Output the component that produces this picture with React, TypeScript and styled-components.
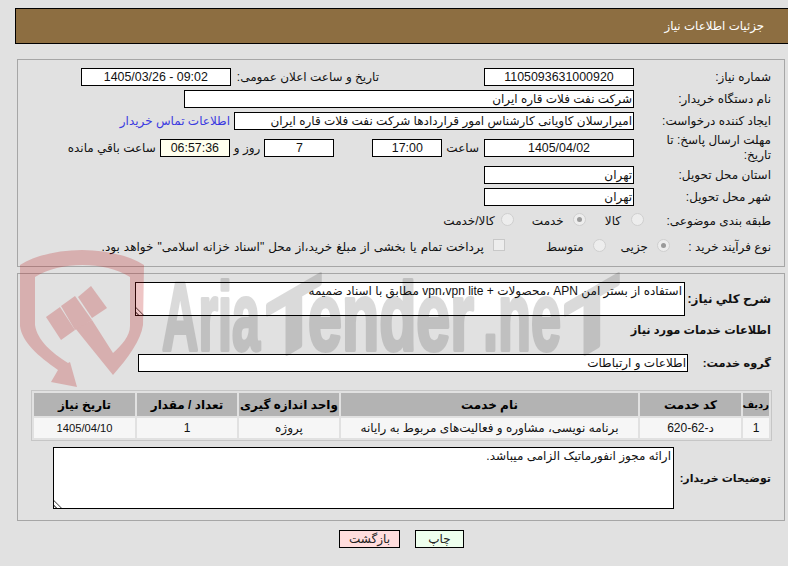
import React from "react";
import styled, { createGlobalStyle } from "styled-components";

const Global = createGlobalStyle`
  html, body { margin: 0; padding: 0; background: #e1e1e1; }
  body { font-family: "Liberation Sans", "DejaVu Sans", sans-serif; font-size: 12px; color: #111; overflow: hidden; }
`;

const Page = styled.div`
  position: relative;
  width: 788px;
  height: 566px;
  padding-top: 8px;
  box-sizing: border-box;
  direction: rtl;
  overflow: hidden;
`;

const Header = styled.div`
  height: 36px;
  margin-left: 15px;
  box-sizing: border-box;
  border: 1px solid #000;
  border-right: 0;
  background: #8d6e41;
  color: #fff;
  display: flex;
  align-items: center;
  padding-right: 24px;
  font-size: 11.8px;
`;

const Panel = styled.section<{ $h: number; $top: number }>`
  box-sizing: border-box;
  height: ${(p) => p.$h}px;
  width: 768px;
  margin: ${(p) => p.$top}px 3px 0 0;
  border: 1px solid #a6a6a6;
`;

const FormBody = styled.div`
  padding-top: 8px;
  display: flex;
  flex-direction: column;
`;

const Row = styled.div<{ $h?: number; $mt?: number }>`
  display: flex;
  align-items: center;
  height: ${(p) => p.$h ?? 18}px;
  margin-top: ${(p) => p.$mt ?? 4}px;
`;

const Label = styled.div<{ $bold?: boolean; $w?: number; $nowrap?: boolean; $size?: number }>`
  width: ${(p) => p.$w ?? 150}px;
  flex: none;
  box-sizing: border-box;
  padding: 0 13px 0 12px;
  line-height: 15px;
  font-weight: ${(p) => (p.$bold ? 700 : 400)};
  font-size: ${(p) => p.$size ?? 12}px;
  white-space: ${(p) => (p.$nowrap ? "nowrap" : "normal")};
`;

const Field = styled.div<{ $w: number; $center?: boolean; $bg?: string; $ml?: number; $ltr?: boolean }>`
  box-sizing: border-box;
  flex: none;
  width: ${(p) => p.$w}px;
  height: 18px;
  line-height: 16px;
  border: 1px solid #000;
  background: ${(p) => p.$bg ?? "#fff"};
  text-align: ${(p) => (p.$center ? "center" : "right")};
  direction: ${(p) => (p.$ltr ? "ltr" : "inherit")};
  padding: 0 1px;
  white-space: nowrap;
  overflow: hidden;
  font-size: ${(p) => (p.$center ? 12.4 : 12)}px;
  margin-right: ${(p) => p.$ml ?? 0}px;
`;

const Text = styled.span<{ $mr?: number; $ws?: number }>`
  flex: none;
  margin-right: ${(p) => p.$mr ?? 0}px;
  word-spacing: ${(p) => p.$ws ?? 0}px;
  white-space: nowrap;
`;

const Link = styled.a`
  flex: none;
  color: #3a3ae0;
  margin-right: 4px;
  white-space: nowrap;
`;

const Radio = styled.span<{ $on?: boolean; $mr?: number }>`
  flex: none;
  box-sizing: border-box;
  width: 13px;
  height: 13px;
  border-radius: 50%;
  border: 1px solid #cfcfcf;
  background: #ededed;
  margin-right: ${(p) => p.$mr ?? 0}px;
  margin-bottom: 3px;
  display: flex;
  align-items: center;
  justify-content: center;
  &::after {
    content: "";
    width: 5px;
    height: 5px;
    border-radius: 50%;
    background: ${(p) => (p.$on ? "#9a9a9a" : "transparent")};
  }
`;

const Check = styled.span<{ $mr?: number }>`
  flex: none;
  box-sizing: border-box;
  width: 12px;
  height: 12px;
  border: 1px solid #c8c8c8;
  background: #ededed;
  margin-right: ${(p) => p.$mr ?? 0}px;
  margin-bottom: 5px;
`;

const Area = styled.div<{ $w: number; $h: number }>`
  position: relative;
  box-sizing: border-box;
  flex: none;
  width: ${(p) => p.$w}px;
  height: ${(p) => p.$h}px;
  border: 1px solid #000;
  background: #fff;
  padding: 1px 2px;
  line-height: 15px;
  &::after {
    content: "";
    position: absolute;
    left: 0;
    bottom: 0;
    width: 8px;
    height: 8px;
    clip-path: polygon(0 0, 0 100%, 100% 100%);
    background: repeating-linear-gradient(45deg, transparent 0 1.2px, #777 1.2px 2.2px, transparent 2.2px 3.6px);
  }
`;

const Table = styled.table`
  width: 741px;
  margin: 18px 12px 0 0;
  border: 1px solid #c6c6c6;
  border-collapse: separate;
  border-spacing: 2px;
  padding: 0;
  table-layout: fixed;
  font-size: 12px;
`;

const Th = styled.th<{ $w?: number; $small?: boolean }>`
  width: ${(p) => (p.$w ? `${p.$w}px` : "auto")};
  height: 23px;
  padding: 0;
  background: #b3b3b3;
  color: #000;
  font-weight: 700;
  font-size: ${(p) => (p.$small ? 10 : 12)}px;
  text-align: center;
  white-space: nowrap;
`;

const Td = styled.td<{ $small?: boolean }>`
  height: 20px;
  padding: 0;
  background: #f6f6f6;
  text-align: center;
  font-size: ${(p) => (p.$small ? 11.2 : 12)}px;
`;

const Footer = styled.div`
  display: flex;
  justify-content: flex-start;
  gap: 15px;
  margin: 9px 0 0 339px;
  direction: ltr;
`;

const Btn = styled.button<{ $bg: string; $w: number }>`
  box-sizing: border-box;
  width: ${(p) => p.$w}px;
  height: 18px;
  border: 1px solid #000;
  background: ${(p) => p.$bg};
  padding: 0;
  font: 12px "Liberation Sans", "DejaVu Sans", sans-serif;
  color: #222;
`;

const Mark = styled.svg`
  position: absolute;
  left: 0;
  top: 240px;
  width: 788px;
  height: 160px;
  pointer-events: none;
  direction: ltr;
`;

const MarkWord = styled.text`
  font-family: "Liberation Sans", sans-serif;
  font-weight: 700;
  font-size: 96px;
  fill: #000;
  stroke: #000;
  stroke-width: 4px;
  stroke-linejoin: round;
`;

const MarkSlantT = styled(MarkWord)`
  font-size: 88px;
  text-anchor: middle;
`;

function Watermark() {
  return (
    <Mark viewBox="0 240 788 160">
      <g fill="rgb(189,29,29)" opacity="0.25">
        <path d="M20 265 C52 245 112 245 144 265 L143 325 C141 340 128 358 113 375 L75 328 L92 320 L113 353 C122 345 130 336 130 326 L130 277 C105 261 60 261 35 277 L35 325 C37 340 52 353 68 363 L70 362 L77 387 L51 382 L58 370 C38 356 22 342 20 326 Z" />
        <path d="M46 317 L60 307 L75 330 L61 340 Z" />
        <path d="M61 306 L75 296 L92 320 L75 330 Z" />
        <path d="M78 297 L91 286 L107 308 L92 318 Z" />
      </g>
      <g opacity="0.14">
        <MarkWord x="162" y="350" textLength="98" lengthAdjust="spacingAndGlyphs">Aria</MarkWord>
        <MarkSlantT transform="translate(294 350) skewY(-30)">T</MarkSlantT>
        <MarkWord x="308" y="350" textLength="166" lengthAdjust="spacingAndGlyphs">ender</MarkWord>
        <MarkWord x="483" y="350" textLength="78" lengthAdjust="spacingAndGlyphs">.ne</MarkWord>
        <MarkSlantT transform="translate(592 350) skewY(-30)">T</MarkSlantT>
      </g>
    </Mark>
  );
}

export default function App() {
  return (
    <Page>
      <Global />
      <Header>جزئیات اطلاعات نیاز</Header>
      <Panel $top={15} $h={208}>
        <FormBody>
          <Row $mt={0}>
            <Label>شماره نیاز:</Label>
            <Field $w={150} $center>1105093631000920</Field>
            <Text $mr={105}>تاریخ و ساعت اعلان عمومی:</Text>
            <Field $w={150} $center $ltr $ml={6}>1405/03/26 - 09:02</Field>
          </Row>
          <Row>
            <Label>نام دستگاه خریدار:</Label>
            <Field $w={450}>شرکت نفت فلات قاره ایران</Field>
          </Row>
          <Row>
            <Label>ایجاد کننده درخواست:</Label>
            <Field $w={400}>امیرارسلان کاویانی کارشناس امور قراردادها شرکت نفت فلات قاره ایران</Field>
            <Link>اطلاعات تماس خریدار</Link>
          </Row>
          <Row $mt={9}>
            <Label>مهلت ارسال پاسخ: تا تاریخ:</Label>
            <Field $w={150} $center>1405/04/02</Field>
            <Text $mr={5}>ساعت</Text>
            <Field $w={70} $center $ml={4}>17:00</Field>
            <Field $w={70} $center $ml={38}>7</Field>
            <Text $mr={4}>روز و</Text>
            <Field $w={70} $center $bg="#ffffee" $ml={4}>06:57:36</Field>
            <Text $mr={4}>ساعت باقي مانده</Text>
          </Row>
          <Row $mt={9}>
            <Label>استان محل تحویل:</Label>
            <Field $w={150}>تهران</Field>
          </Row>
          <Row>
            <Label>شهر محل تحویل:</Label>
            <Field $w={150}>تهران</Field>
          </Row>
          <Row $mt={6}>
            <Label>طبقه بندی موضوعی:</Label>
            <Radio $mr={-10} />
            <Text $mr={10}>کالا</Text>
            <Radio $mr={19} $on />
            <Text $mr={9}>خدمت</Text>
            <Radio $mr={18} />
            <Text $mr={6}>کالا/خدمت</Text>
          </Row>
          <Row $mt={8}>
            <Label>نوع فرآیند خرید :</Label>
            <Radio $mr={-36} $on />
            <Text $mr={9}>جزیی</Text>
            <Radio $mr={15} />
            <Text $mr={9}>متوسط</Text>
            <Check $mr={41} />
            <Text $mr={9} $ws={0.7}>پرداخت تمام یا بخشی از مبلغ خرید،از محل "اسناد خزانه اسلامی" خواهد بود.</Text>
          </Row>
        </FormBody>
      </Panel>
      <Panel $top={6} $h={248}>
        <FormBody>
          <Row $h={34} $mt={0}>
            <Label $bold $w={99} $nowrap>شرح کلي نیاز:</Label>
            <Area $w={550} $h={34}>استفاده از بستر امن APN ،محصولات + vpn،vpn lite مطابق با اسناد ضمیمه</Area>
          </Row>
          <Row $h={18} $mt={5}>
            <Label $bold $w={300} $nowrap $size={11.4}>اطلاعات خدمات مورد نیاز</Label>
          </Row>
          <Row $mt={15}>
            <Label $bold $w={96} $nowrap $size={11.4}>گروه خدمت:</Label>
            <Field $w={550}>اطلاعات و ارتباطات</Field>
          </Row>
          <Table>
            <thead>
              <tr>
                <Th $w={26} $small>ردیف</Th>
                <Th $w={101}>کد خدمت</Th>
                <Th $w={297}>نام خدمت</Th>
                <Th $w={100}>واحد اندازه گیری</Th>
                <Th $w={100}>تعداد / مقدار</Th>
                <Th>تاریخ نیاز</Th>
              </tr>
            </thead>
            <tbody>
              <tr>
                <Td>1</Td>
                <Td>د-62-620</Td>
                <Td>برنامه نویسی، مشاوره و فعالیت‌های مربوط به رایانه</Td>
                <Td>پروژه</Td>
                <Td>1</Td>
                <Td $small>1405/04/10</Td>
              </tr>
            </tbody>
          </Table>
          <Row $h={62} $mt={6}>
            <Label $bold $w={110} $nowrap $size={11}>توضیحات خریدار:</Label>
            <Area $w={621} $h={62}>ارائه مجوز انفورماتیک الزامی میباشد.</Area>
          </Row>
        </FormBody>
      </Panel>
      <Footer>
        <Btn $bg="#ffdddd" $w={61}>بازگشت</Btn>
        <Btn $bg="#eeffee" $w={49}>چاپ</Btn>
      </Footer>
      <Watermark />
    </Page>
  );
}
